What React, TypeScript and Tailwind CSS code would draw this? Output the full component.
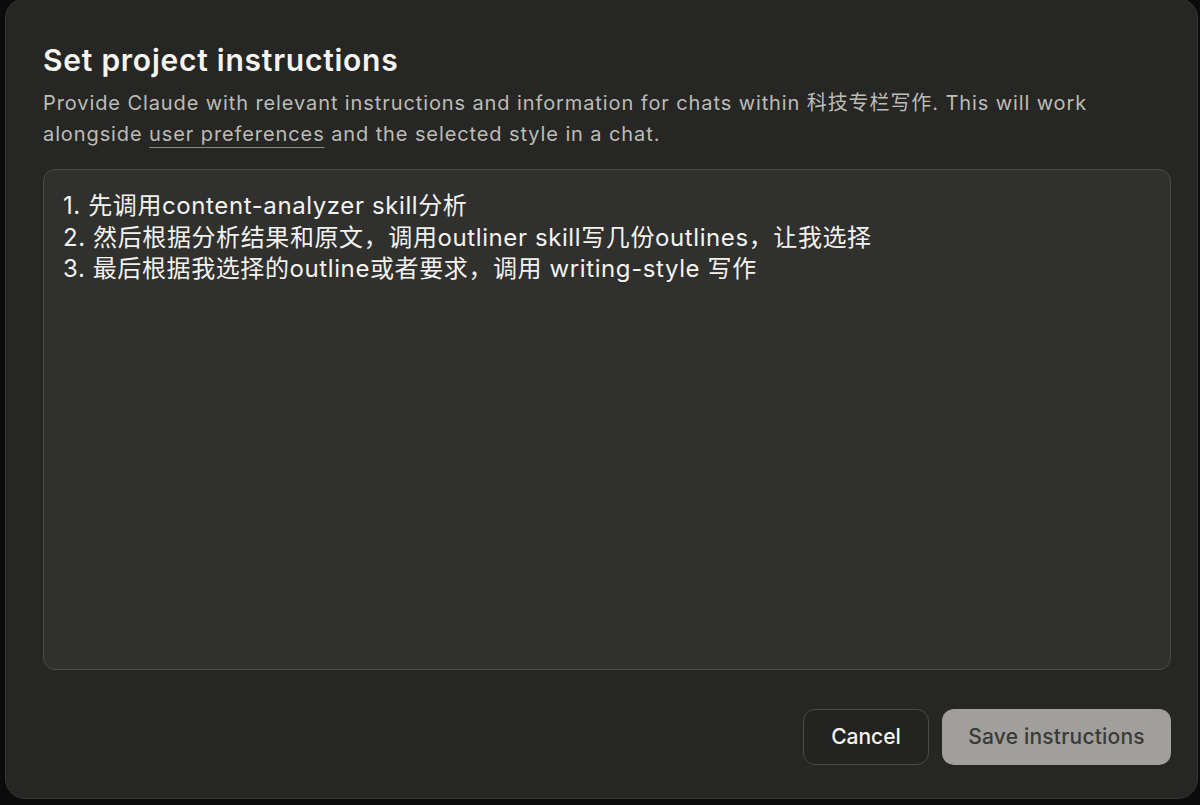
export default function App() {
  const lines = [
    "1. 先调用content-analyzer skill分析",
    "2. 然后根据分析结果和原文，调用outliner skill写几份outlines，让我选择",
    "3. 最后根据我选择的outline或者要求，调用 writing-style 写作",
  ];

  return (
    <div className="h-[805px] w-[1200px] overflow-hidden bg-[#0b0b0b] font-['Inter','Noto_Sans_CJK_SC',sans-serif]">
      <div className="ml-[5px] mt-[-2px] flex h-[801px] w-[1193px] flex-col rounded-[20px] border border-[#353533] bg-[#262624] pl-[37px] pr-[26px] pt-[41px]">
        <h2 className="text-[30px] font-semibold leading-[40px] tracking-[0.025em] text-[#f5f4ef]">
          Set project instructions
        </h2>

        <p className="mt-[8px] text-[20px] leading-[31px] tracking-[0.045em] text-[#bdbcb6]">
          Provide Claude with relevant instructions and information for chats within 科技专栏写作. This will work
          <br />
          alongside{" "}
          <span className="underline decoration-[#8a8984] decoration-1 underline-offset-[6px]">
            user preferences
          </span>{" "}
          and the selected style in a chat.
        </p>

        <div className="mt-[19px] h-[501px] w-[1128px] rounded-[12px] border border-[#4a4a47] bg-[#30302e] px-[19px] pt-[20px]">
          {lines.map((line, i) => (
            <div key={i} className="text-[24px] leading-[31.5px] tracking-[0.025em] text-[#f4f3ee]">
              {line}
            </div>
          ))}
        </div>

        <div className="mt-[39px] flex w-[1128px] justify-end gap-[13px]">
          <button className="h-[56px] w-[126px] rounded-[12px] border border-[#4b4b48] bg-[#232321] text-[21px] font-medium text-[#f5f4ef]">
            Cancel
          </button>
          <button className="h-[56px] w-[229px] rounded-[12px] bg-[#a09f9b] text-[21px] font-medium tracking-[0.01em] text-[#3a3a37]">
            Save instructions
          </button>
        </div>
      </div>
    </div>
  );
}
